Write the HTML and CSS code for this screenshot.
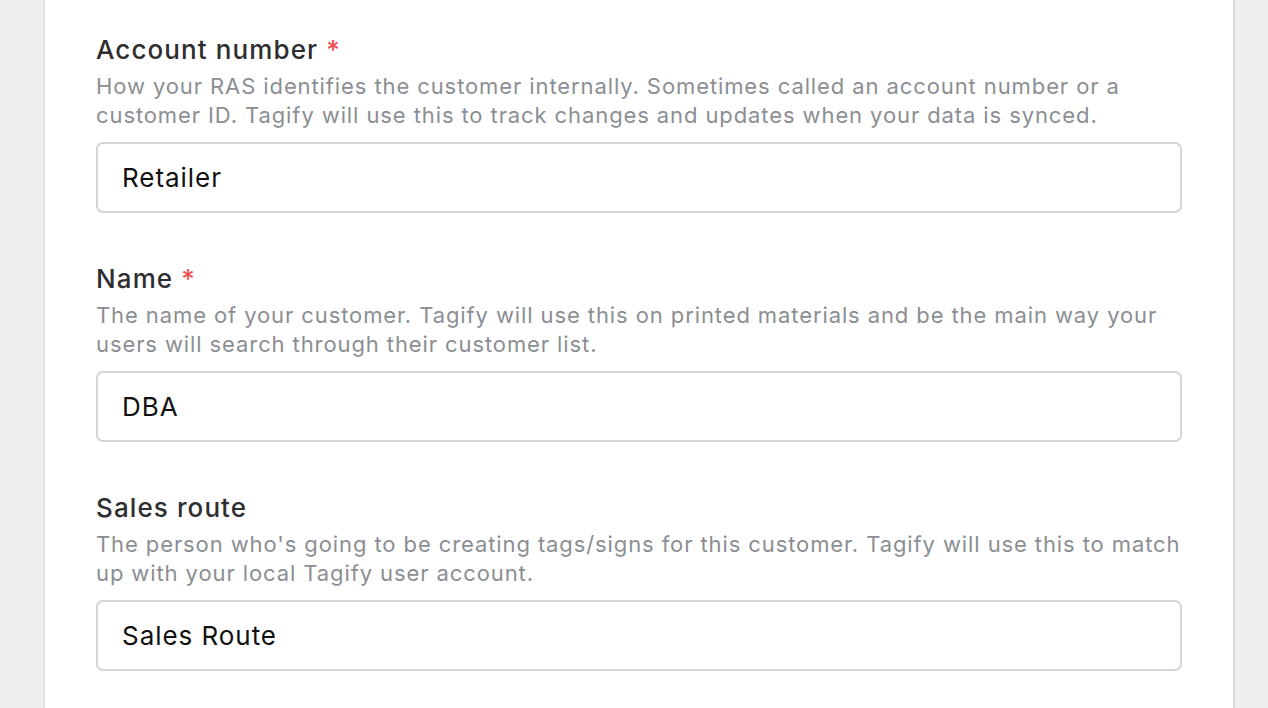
FILE: index.html
```html
<!DOCTYPE html>
<html lang="en">
<head>
<meta charset="utf-8">
<title>Customer fields</title>
<link rel="stylesheet" href="styles.css">
</head>
<body>
<div class="page">
  <div class="panel">
    <div class="field">
      <label class="label" for="acct">Account number <span class="req">*</span></label>
      <p class="help">How your RAS identifies the customer internally. Sometimes called an account number or a customer ID. Tagify will use this to track changes and updates when your data is synced.</p>
      <input class="input" id="acct" type="text" value="Retailer">
    </div>
    <div class="field">
      <label class="label" for="name">Name <span class="req">*</span></label>
      <p class="help">The name of your customer. Tagify will use this on printed materials and be the main way your users will search through their customer list.</p>
      <input class="input" id="name" type="text" value="DBA">
    </div>
    <div class="field">
      <label class="label" for="route">Sales route</label>
      <p class="help">The person who's going to be creating tags/signs for this customer. Tagify will use this to match up with your local Tagify user account.</p>
      <input class="input" id="route" type="text" value="Sales Route">
    </div>
  </div>
</div>
</body>
</html>
```

FILE: styles.css
```css
html, body {
  margin: 0;
  padding: 0;
  height: 100%;
  overflow: hidden;
}
body {
  background: #efefef;
  font-family: Inter, "Noto Sans", sans-serif;
}
.page {
  padding: 0 33px 0 43px;
  height: 100%;
}
.panel {
  background: #ffffff;
  border-left: 2px solid #e2e2e2;
  border-right: 2px solid #d9d9d9;
  height: 100%;
  box-sizing: border-box;
  padding: 32px 51px 0 51px;
}
.field {
  display: flex;
  flex-direction: column;
  margin-bottom: 48px;
}
.label {
  font-size: 26px;
  line-height: 36px;
  font-weight: 500;
  letter-spacing: 1.1px;
  color: #2e2e30;
}
.req {
  color: #ef4f4f;
}
.help {
  margin: 4px 0 0 0;
  font-size: 22px;
  line-height: 29px;
  letter-spacing: 0.9px;
  color: #8b8e92;
}
.input {
  margin-top: 12px;
  height: 71px;
  box-sizing: border-box;
  border: 2px solid #d3d5d8;
  border-radius: 7px;
  padding: 0 24px;
  font-family: Inter, "Noto Sans", sans-serif;
  font-size: 26px;
  letter-spacing: 0.95px;
  color: #111111;
  background: #fff;
  outline: none;
}
```
